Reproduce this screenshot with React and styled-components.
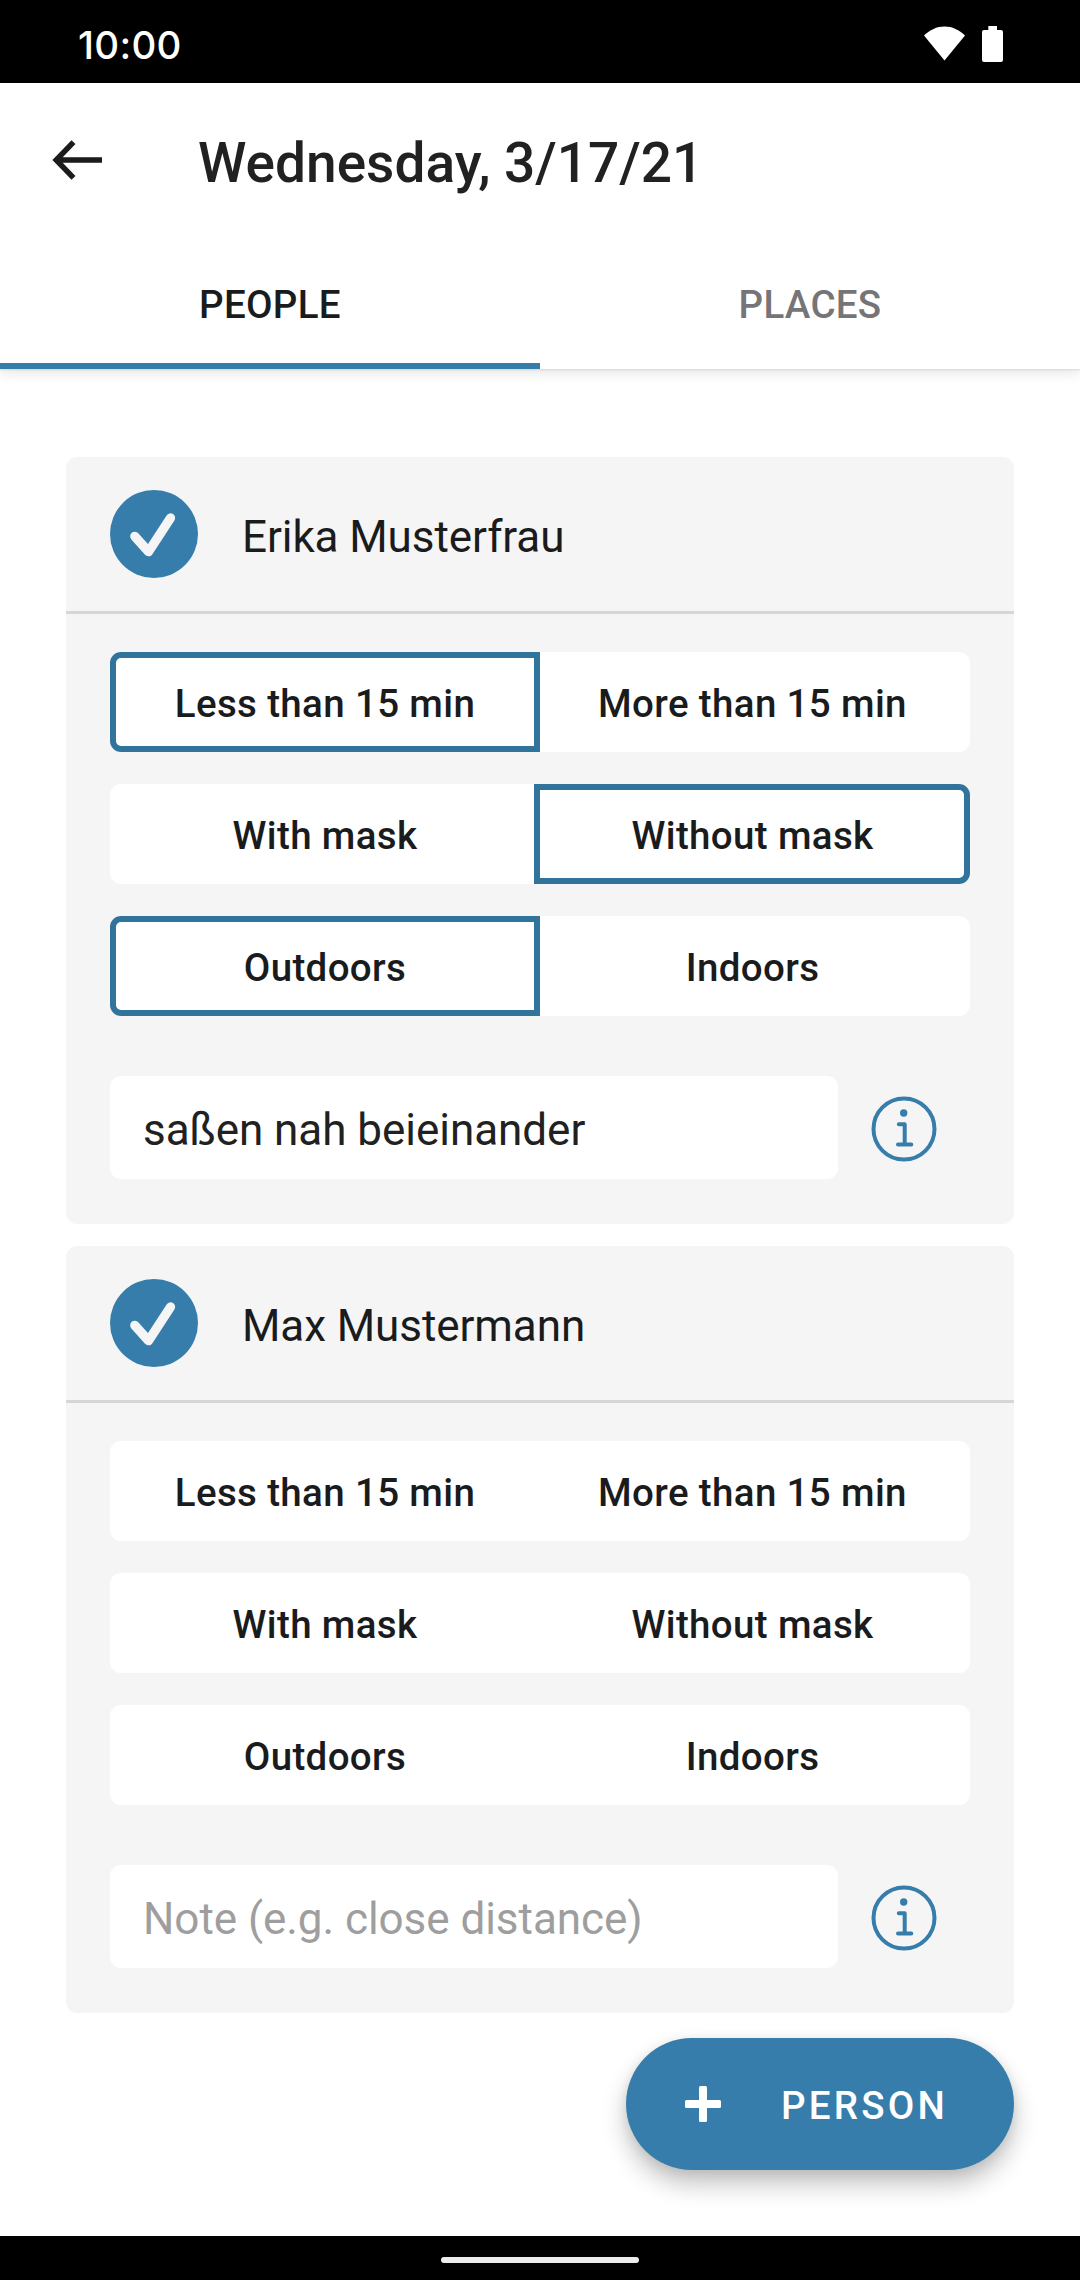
import React, { useState } from "react";
import styled, { createGlobalStyle } from "styled-components";

const BLUE = "#377dab";
const BLUE_DARK = "#31749b";
const INK = "#1a1b1c";

const GlobalStyle = createGlobalStyle`
  *, *::before, *::after { box-sizing: border-box; }
  body { margin: 0; background: #fff; }
  button, input { font: inherit; color: inherit; border: 0; padding: 0; margin: 0; background: none; outline: none; }
`;

const Screen = styled.div`
  display: flex;
  flex-direction: column;
  width: 1080px;
  height: 2280px;
  overflow: hidden;
  background: #fff;
  color: ${INK};
  font-family: Roboto, "Noto Sans", sans-serif;
`;

const StatusBar = styled.div`
  flex: none;
  display: flex;
  align-items: center;
  justify-content: space-between;
  height: 83px;
  padding: 4px 77px 0 78px;
  background: #000;
  color: #fff;
`;

const Clock = styled.span`
  margin-top: 2px;
  font: 500 38.5px/46px Inter, Roboto, sans-serif;
  letter-spacing: 0.3px;
`;

const StatusIcons = styled.div`
  display: flex;
  align-items: center;
  gap: 17px;
  svg { display: block; }
`;

const TopBar = styled.div`
  flex: none;
  background: #fff;
  box-shadow: 0 1px 2px rgba(0, 0, 0, 0.1), 0 4px 12px rgba(0, 0, 0, 0.1);
`;

const Header = styled.header`
  display: flex;
  align-items: center;
  height: 154px;
`;

const BackButton = styled.button`
  display: flex;
  align-items: center;
  height: 56px;
  margin-right: 93px;
  padding-left: 51px;
  svg { display: block; }
`;

const Title = styled.h1`
  margin: 6px 0 0;
  font-size: 55px;
  line-height: 64px;
  font-weight: 500;
  color: #212121;
`;

const Tabs = styled.nav`
  display: flex;
  height: 132px;
`;

const Tab = styled.button`
  flex: 1;
  padding-top: 9px;
  border-bottom: 6px solid ${(p) => (p.$active ? BLUE : "transparent")};
  color: ${(p) => (p.$active ? INK : "#757577")};
  font-size: 38.5px;
  line-height: 46px;
  font-weight: 500;
  letter-spacing: 0.3px;
`;

const Content = styled.main`
  flex: 1;
  display: flex;
  flex-direction: column;
  gap: 22px;
  padding: 88px 66px 0;
`;

const Card = styled.section`
  flex: none;
  height: 767px;
  border-radius: 11px;
  background: #f5f5f5;
`;

const CardHeader = styled.div`
  display: flex;
  align-items: center;
  gap: 44px;
  height: 157px;
  padding: 0 44px;
  border-bottom: 3px solid #d6d6d6;
`;

const CheckCircle = styled.span`
  display: grid;
  place-items: center;
  width: 88px;
  height: 88px;
  border-radius: 50%;
  background: ${BLUE};
`;

const Name = styled.span`
  margin-top: 6px;
  font-size: 44px;
  line-height: 52px;
  letter-spacing: -0.08px;
`;

const CardBody = styled.div`
  display: flex;
  flex-direction: column;
  gap: 32px;
  padding: 38px 44px 0;
`;

const ToggleGroup = styled.div`
  display: flex;
  height: 100px;
  border-radius: 11px;
  background: #fff;
`;

const Toggle = styled.button`
  flex: none;
  width: 430px;
  padding-top: 4px;
  font-size: 38.5px;
  line-height: 46px;
  font-weight: 500;
  letter-spacing: 0.36px;
  border: 6px solid ${(p) => (p.$selected ? BLUE_DARK : "transparent")};
  border-radius: 11px 0 0 11px;
  & + & {
    width: 436px;
    margin-left: -6px;
    padding-left: 1px;
    border-radius: 0 11px 11px 0;
  }
`;

const NoteRow = styled.div`
  display: flex;
  align-items: center;
  gap: 33px;
  margin-top: 28px;
`;

const NoteInput = styled.input`
  && {
    width: 728px;
    height: 103px;
    padding: 4px 33px 0;
    border-radius: 11px;
    background: #fff;
    color: #212121;
    font-size: 44px;
    letter-spacing: -0.04px;
  }
  &::placeholder { color: #9e9e9e; opacity: 1; }
`;

const InfoButton = styled.button`
  padding-top: 2px;
  svg { display: block; }
`;

const Fab = styled.button`
  && {
    flex: none;
    align-self: flex-end;
    display: flex;
    align-items: center;
    gap: 59px;
    width: 388px;
    height: 132px;
    margin-top: 3px;
    padding-left: 58px;
    border-radius: 66px;
    background: ${BLUE};
    color: #fff;
    box-shadow: 0 14px 24px rgba(0, 0, 0, 0.24), 0 2px 12px rgba(0, 0, 0, 0.08);
  }
`;

const FabLabel = styled.span`
  margin-top: 4px;
  font-size: 38.5px;
  line-height: 46px;
  font-weight: 500;
  letter-spacing: 3.2px;
`;

const NavBar = styled.div`
  flex: none;
  display: flex;
  align-items: center;
  justify-content: center;
  height: 44px;
  padding-top: 4px;
  background: #000;
`;

const HomeHandle = styled.div`
  width: 198px;
  height: 6px;
  border-radius: 3px;
  background: #ececec;
`;

const WifiIcon = () => (
  <svg width="41" height="36" viewBox="0 0 41 36" fill="#fff">
    <path d="M0 9.500C5.800 3.700 12.800 .4 20.500 .4S35.200 3.700 41 9.500L20.500 34.500Z" />
  </svg>
);

const BatteryIcon = () => (
  <svg width="21" height="36" viewBox="0 0 21 36" fill="#fff">
    <path d="M6.300 0H15V4H19A2 2 0 0 1 21 6V34A2 2 0 0 1 19 36H2A2 2 0 0 1 0 34V6A2 2 0 0 1 2 4H6.300Z" />
  </svg>
);

const BackIcon = () => (
  <svg width="54" height="42" viewBox="0 0 54 42" fill="none" stroke={INK} strokeWidth="5.500">
    <path d="M51 21H6M22.500 3.200L5.200 21L22.500 38.800" />
  </svg>
);

const CheckIcon = () => (
  <svg width="88" height="88" viewBox="0 0 88 88" fill="none" stroke="#f5f5f5" strokeWidth="9.300" strokeLinecap="round" strokeLinejoin="round">
    <path d="M24.800 46.300L38.500 61.700L60.500 28" />
  </svg>
);

const InfoIcon = () => (
  <svg width="66" height="66" viewBox="0 0 66 66" fill="none" stroke={BLUE} strokeWidth="4">
    <circle cx="33" cy="33" r="30.500" />
    <circle cx="32.700" cy="17" r="3.700" fill={BLUE} stroke="none" />
    <path d="M27.800 28.200H33.700V48.500M27 48.500H40.300" strokeLinecap="round" strokeLinejoin="round" />
  </svg>
);

const PlusIcon = () => (
  <svg width="38" height="38" viewBox="0 0 38 38" fill="#fff">
    <rect x="1" y="15" width="36" height="8" rx="1.500" />
    <rect x="15" y="1" width="8" height="36" rx="1.500" />
  </svg>
);

const QUESTIONS = [
  ["Less than 15 min", "More than 15 min"],
  ["With mask", "Without mask"],
  ["Outdoors", "Indoors"],
];

function PersonCard({ name, initial, note }) {
  const [answers, setAnswers] = useState(initial);
  const choose = (q, a) => setAnswers(answers.map((v, i) => (i === q ? a : v)));
  return (
    <Card>
      <CardHeader>
        <CheckCircle><CheckIcon /></CheckCircle>
        <Name>{name}</Name>
      </CardHeader>
      <CardBody>
        {QUESTIONS.map((options, q) => (
          <ToggleGroup key={q}>
            {options.map((label, a) => (
              <Toggle key={label} $selected={answers[q] === a} onClick={() => choose(q, a)}>{label}</Toggle>
            ))}
          </ToggleGroup>
        ))}
        <NoteRow>
          <NoteInput defaultValue={note} placeholder="Note (e.g. close distance)" spellCheck={false} />
          <InfoButton aria-label="Info"><InfoIcon /></InfoButton>
        </NoteRow>
      </CardBody>
    </Card>
  );
}

export default function App() {
  const [tab, setTab] = useState("PEOPLE");
  return (
    <>
      <GlobalStyle />
      <Screen>
        <StatusBar>
          <Clock>10:00</Clock>
          <StatusIcons><WifiIcon /><BatteryIcon /></StatusIcons>
        </StatusBar>
        <TopBar>
          <Header>
            <BackButton aria-label="Back"><BackIcon /></BackButton>
            <Title>Wednesday, 3/17/21</Title>
          </Header>
          <Tabs>
            {["PEOPLE", "PLACES"].map((t) => (
              <Tab key={t} $active={t === tab} onClick={() => setTab(t)}>{t}</Tab>
            ))}
          </Tabs>
        </TopBar>
        <Content>
          <PersonCard name="Erika Musterfrau" initial={[0, 1, 0]} note="saßen nah beieinander" />
          <PersonCard name="Max Mustermann" initial={[null, null, null]} note="" />
          <Fab><PlusIcon /><FabLabel>PERSON</FabLabel></Fab>
        </Content>
        <NavBar><HomeHandle /></NavBar>
      </Screen>
    </>
  );
}
